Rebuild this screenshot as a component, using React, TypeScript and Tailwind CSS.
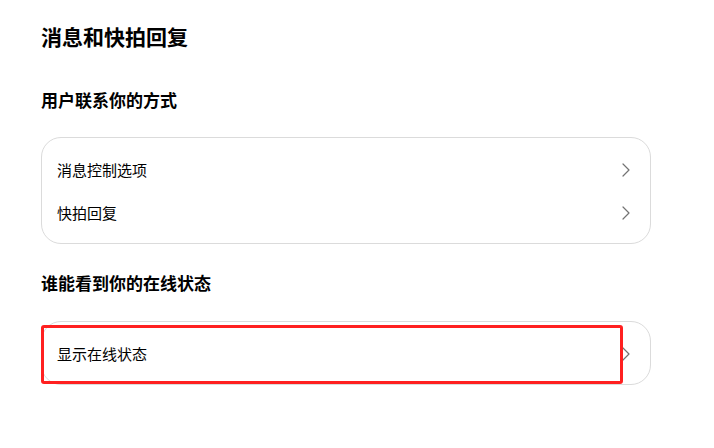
const FONT = "font-['Noto_Sans_CJK_SC','Microsoft_YaHei',sans-serif]";

function Chevron() {
  return (
    <svg width="8" height="14" viewBox="0 0 8 14" fill="none" className="shrink-0">
      <polyline
        points="1,1 7,7 1,13"
        stroke="#737373"
        strokeWidth="1.2"
        strokeLinecap="round"
        strokeLinejoin="round"
      />
    </svg>
  );
}

function Row({ label }: { label: string }) {
  return (
    <div className="flex h-[43px] items-center justify-between pl-[15px] pr-[20px]">
      <span className="text-[15px] leading-[20px] text-black">{label}</span>
      <Chevron />
    </div>
  );
}

export default function App() {
  return (
    <div className={`min-h-screen w-[714px] bg-white ${FONT}`}>
      <div className="w-[610px] pl-[41px] pt-[22px] box-content">
        <h1 className="text-[21px] font-bold leading-[28px] text-black">消息和快拍回复</h1>

        <h2 className="mt-[38px] text-[17px] font-bold leading-[24px] text-black">用户联系你的方式</h2>
        <div className="mt-[25px] rounded-[20px] border border-[#dbdbdb] pt-[10px] pb-[9px]">
          <Row label="消息控制选项" />
          <Row label="快拍回复" />
        </div>

        <h2 className="mt-[27px] text-[17px] font-bold leading-[24px] text-black">谁能看到你的在线状态</h2>
        <div className="relative mt-[26px] rounded-[20px] border border-[#dbdbdb] pt-[10px] pb-[9px]">
          <Row label="显示在线状态" />
          {/* annotation box */}
          <div className="pointer-events-none absolute left-[-1px] top-[3px] h-[59px] w-[582px] rounded-[3px] border-[3px] border-[#ff2020]" />
        </div>
      </div>
    </div>
  );
}
